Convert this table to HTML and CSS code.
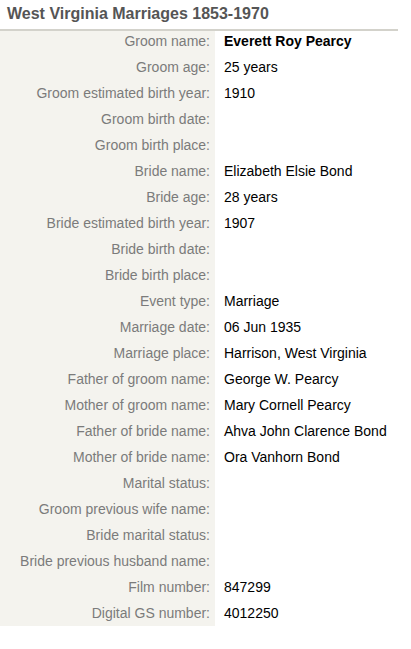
FILE: index.html
```html
<!DOCTYPE html>
<html>
<head>
<meta charset="utf-8">
<link rel="stylesheet" href="styles.css">
</head>
<body>
<div class="page">
  <h1 class="title">West Virginia Marriages 1853-1970</h1>
  <table class="record">
    <tr class="first"><th>Groom name:</th><td class="strong">Everett Roy Pearcy</td></tr>
    <tr><th>Groom age:</th><td>25 years</td></tr>
    <tr><th>Groom estimated birth year:</th><td>1910</td></tr>
    <tr><th>Groom birth date:</th><td></td></tr>
    <tr><th>Groom birth place:</th><td></td></tr>
    <tr><th>Bride name:</th><td>Elizabeth Elsie Bond</td></tr>
    <tr><th>Bride age:</th><td>28 years</td></tr>
    <tr><th>Bride estimated birth year:</th><td>1907</td></tr>
    <tr><th>Bride birth date:</th><td></td></tr>
    <tr><th>Bride birth place:</th><td></td></tr>
    <tr><th>Event type:</th><td>Marriage</td></tr>
    <tr><th>Marriage date:</th><td>06 Jun 1935</td></tr>
    <tr><th>Marriage place:</th><td>Harrison, West Virginia</td></tr>
    <tr><th>Father of groom name:</th><td>George W. Pearcy</td></tr>
    <tr><th>Mother of groom name:</th><td>Mary Cornell Pearcy</td></tr>
    <tr><th>Father of bride name:</th><td>Ahva John Clarence Bond</td></tr>
    <tr><th>Mother of bride name:</th><td>Ora Vanhorn Bond</td></tr>
    <tr><th>Marital status:</th><td></td></tr>
    <tr><th>Groom previous wife name:</th><td></td></tr>
    <tr><th>Bride marital status:</th><td></td></tr>
    <tr><th>Bride previous husband name:</th><td></td></tr>
    <tr><th>Film number:</th><td>847299</td></tr>
    <tr><th>Digital GS number:</th><td>4012250</td></tr>
  </table>
</div>
</body>
</html>
```

FILE: styles.css
```css
html, body {
  margin: 0;
  padding: 0;
  background: #ffffff;
}
.page {
  width: 398px;
  font-family: "Liberation Sans", Arial, sans-serif;
}
.title {
  margin: 0;
  padding: 5px 0 0 7px;
  height: 31px;
  box-sizing: border-box;
  font-size: 16px;
  font-weight: bold;
  color: #555555;
  line-height: 18px;
  border-bottom: 2px solid #d3d2cb;
}
.record {
  border-collapse: collapse;
  margin: 0;
  font-size: 14px;
  line-height: 16px;
}
.record th,
.record td {
  height: 26px;
  box-sizing: border-box;
  padding-top: 5px;
  padding-bottom: 0;
  vertical-align: top;
  white-space: nowrap;
}
.record .first th,
.record .first td {
  height: 23px;
  padding-top: 2px;
}
.record th {
  width: 215px;
  padding-left: 0;
  padding-right: 5px;
  text-align: right;
  font-weight: normal;
  color: #7b7b7b;
  background: #f4f3ee;
}
.record td {
  padding-left: 9px;
  padding-right: 0;
  color: #000000;
}
.record td.strong {
  font-weight: bold;
}
```
